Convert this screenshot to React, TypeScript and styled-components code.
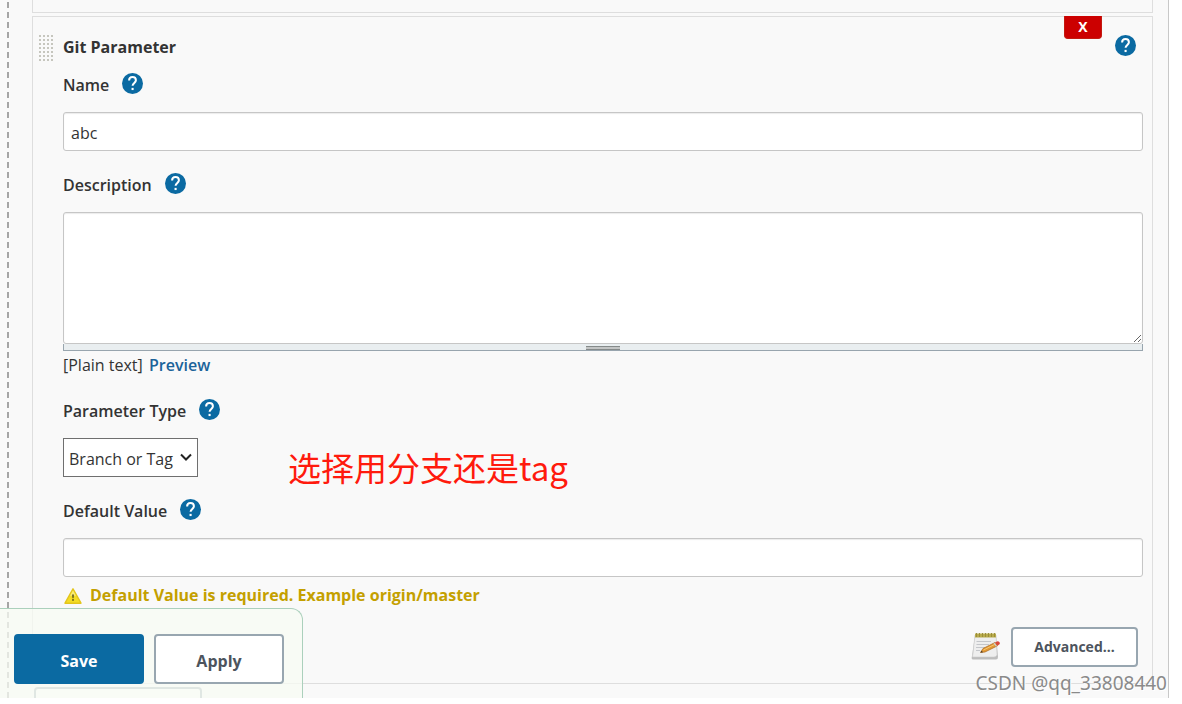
import React from 'react';
import styled, { createGlobalStyle } from 'styled-components';

const Global = createGlobalStyle`
  *, *::before, *::after { box-sizing: border-box; }
  body {
    margin: 0;
    background: #fff;
    color: #333;
    font: 400 16px/24px "Open Sans", "Noto Sans", "Noto Sans CJK SC", sans-serif;
  }
  button, input, textarea, select { font: inherit; color: inherit; margin: 0; }
`;

const Panel = styled.main`
  position: relative;
  height: calc(100vh - 6px);
  margin-right: 13px;
  padding: 0 15px 0 32px;
  overflow: hidden;
  background:
    repeating-linear-gradient(to bottom, #f9f9f9 0 2px, #a5a5a5 2px 8px, #f9f9f9 8px 10px) 7px 0 / 2px 100% no-repeat,
    #f9f9f9;
  border-right: 1px solid #c8c8c8;
`;

const PreviousCard = styled.div`
  height: 13px;
  margin-bottom: 3px;
  border: 1px solid #dedede;
  border-top: 0;
`;

const Card = styled.section`
  position: relative;
  padding: 18px 9px 16px 30px;
  border: 1px solid #dedede;
`;

const DragHandle = styled.div`
  position: absolute;
  left: 4px;
  top: 16px;
  width: 16px;
  height: 30px;
  background:
    repeating-linear-gradient(to bottom, #f9f9f9 0 2px, transparent 2px 4px),
    repeating-linear-gradient(to right, #f9f9f9 0 2px, #c6c6be 2px 4px);
`;

const CardHead = styled.header`
  display: flex;
  justify-content: space-between;
  height: 24px;
  margin-bottom: 13px;
  padding-right: 7px;
`;

const Title = styled.h2`
  margin: 0;
  font-size: 16px;
  line-height: 24px;
  font-weight: 700;
`;

const DeleteButton = styled.button`
  position: absolute;
  top: -1px;
  right: 50px;
  width: 38px;
  height: 23px;
  padding: 0;
  border: 1px solid #c31a10;
  border-top: 0;
  border-radius: 0 0 4px 4px;
  background: #c00;
  color: #fff;
  font-size: 14px;
  line-height: 20px;
  font-weight: 700;
`;

const HelpButton = styled.button`
  display: block;
  width: 21px;
  height: 21px;
  padding: 0;
  border: 0;
  background: none;
  svg { display: block; }
`;

const Field = styled.div`
  margin-bottom: 21px;
`;

const LabelRow = styled.div`
  display: flex;
  gap: 13px;
  height: 24px;
  margin-bottom: 16px;
  padding-top: 1px;
`;

const Label = styled.label`
  font-weight: 600;
`;

const TextInput = styled.input`
  display: block;
  width: 100%;
  height: 39px;
  padding: 2px 7px 0;
  border: 1px solid #c6c6c6;
  border-radius: 3px;
  background: #fff;
  box-shadow: inset 0 1px 1px rgba(0, 0, 0, 0.08);
  outline: 0;
`;

const TextArea = styled.textarea`
  display: block;
  width: 100%;
  height: 132px;
  padding: 6px;
  border: 1px solid #c6c6c6;
  border-radius: 3px;
  background: #fff;
  box-shadow: inset 0 1px 1px rgba(0, 0, 0, 0.08);
  resize: vertical;
  outline: 0;
`;

const Grip = styled.div`
  display: flex;
  justify-content: center;
  align-items: flex-end;
  height: 7px;
  margin-bottom: 2px;
  border: 1px solid #98a5ae;
  border-top: 0;
  background: #e9eef0;
  &::before {
    content: "";
    width: 34px;
    height: 4px;
    border: solid #858a8a;
    border-width: 1px 0;
    background: #c3c5c5;
  }
`;

const PreviewLink = styled.a`
  margin-left: 2px;
  color: #1b6399;
  font-weight: 600;
  text-decoration: none;
`;

const SelectBox = styled.div`
  position: relative;
  width: 135px;
  svg {
    position: absolute;
    right: 6px;
    top: 15px;
    pointer-events: none;
  }
`;

const Select = styled.select`
  display: block;
  width: 100%;
  height: 39px;
  padding: 2px 20px 0 5px;
  appearance: none;
  border: 1px solid #6f6f6f;
  border-radius: 0;
  background: #fff;
`;

const Warning = styled.p`
  display: flex;
  gap: 8px;
  margin: -15px 0 20px;
  padding-left: 1px;
  color: #c4a000;
  font-weight: 700;
  svg { display: block; margin-top: 4px; }
`;

const Actions = styled.div`
  display: flex;
  justify-content: flex-end;
  gap: 10px;
  padding-right: 5px;
  svg { margin-top: 4px; }
`;

const AdvancedButton = styled.button`
  width: 127px;
  height: 40px;
  padding: 0;
  border: 2px solid #98a6b0;
  border-radius: 4px;
  background: #fff;
  color: #4d545d;
  font-size: 14px;
  font-weight: 700;
`;

const AddButton = styled.button`
  display: block;
  width: 168px;
  height: 40px;
  margin: 3px 0 0 2px;
  border: 2px solid #98a6b0;
  border-radius: 4px;
  background: #fff;
`;

const BottomBar = styled.div`
  position: absolute;
  left: 0;
  bottom: 0;
  display: flex;
  gap: 10px;
  width: 303px;
  height: 90px;
  padding: 25px 0 0 14px;
  border: 1px solid #abd0bc;
  border-width: 1px 1px 0 0;
  border-top-right-radius: 12px;
  background: rgba(247, 251, 243, 0.76);
`;

const BarButton = styled.button<{ $primary?: boolean }>`
  width: 130px;
  height: 50px;
  padding: 3px 0 0;
  border: 2px solid ${p => (p.$primary ? '#0b6aa2' : '#98a6b0')};
  border-radius: 4px;
  background: ${p => (p.$primary ? '#0b6aa2' : '#fff')};
  color: ${p => (p.$primary ? '#fff' : '#4d545d')};
  font-weight: 700;
`;

const Annotation = styled.div`
  position: absolute;
  left: 288px;
  top: 443px;
  color: #ff1a0d;
  font: 400 33px/48px "Noto Sans CJK SC", sans-serif;
  white-space: nowrap;
`;

const Watermark = styled.div`
  position: absolute;
  right: 1px;
  bottom: 1px;
  color: #8a8a8a;
  font: 400 19px/28px "Noto Sans", sans-serif;
  text-shadow: 1px 1px 0 #fff;
  white-space: nowrap;
`;

const Help = ({ topic }: { topic: string }) => (
  <HelpButton type="button" aria-label={`Help for ${topic}`}>
    <svg width="21" height="21" viewBox="0 0 24 24" fill="#0b6aa2">
      <circle cx="12" cy="12" r="12" />
      <path d="M8.1 8.7C8.1 6.1 9.8 4.7 12 4.7s3.9 1.5 3.9 3.7c0 2.8-3.8 3.2-3.8 6.3" fill="none" stroke="#fff" strokeWidth="2.3" />
      <rect x="10.9" y="17" width="2.4" height="2.5" fill="#fff" />
    </svg>
  </HelpButton>
);

const WarningIcon = () => (
  <svg width="18" height="18" viewBox="0 0 18 18" aria-hidden="true">
    <path d="M9 1.8 17 16.2H1Z" fill="#f3dc25" stroke="#e3c51c" strokeWidth="1.4" strokeLinejoin="round" />
    <path d="M9 3.4 12 8.8 6 8.8Z" fill="#f9ec76" />
    <path d="M8.2 7.5h1.6l-.3 3.8H8.5Z" fill="#4b4718" />
    <rect x="8.2" y="12.2" width="1.6" height="1.5" fill="#4b4718" />
  </svg>
);

const NotepadIcon = () => (
  <svg width="30" height="32" viewBox="0 0 30 32" aria-hidden="true">
    <path d="M4 4H25L27 26Q27 28.5 25 28.5H2Q0 28.5 1 25Z" fill="#bdbdbd" />
    <path d="M4 4H25L26 24Q25 26 23 26H2Q1 26 2 23Z" fill="#eeeeee" stroke="#cfcfcf" strokeWidth=".6" />
    <path d="M4 2.5H25V6.5H4Z" fill="#b9ac4c" />
    <path d="M5.5 2V6M8.5 2V6M11.5 2V6M14.5 2V6M17.5 2V6M20.5 2V6M23.5 2V6" stroke="#9b8e3a" strokeWidth="1" />
    <path d="M5.5 10.5H20M5.5 13.5H18M5 16.5H14M5 19.5H9" stroke="#c4c6ca" strokeWidth="1" />
    <path d="M9.5 21.5 12 17.5 24 11.5 26.5 14.8 14 21Z" fill="#e39a35" stroke="#a9671c" strokeWidth=".7" />
    <path d="M12.5 19 25 12.8" stroke="#f6c46d" strokeWidth="1" />
    <path d="M9.5 21.5 10.6 19.7 12 21.2Z" fill="#3b3328" />
    <path d="M24 11.5 26.5 10.2Q29 10.2 28.8 13L26.5 14.8Z" fill="#d9483b" />
    <path d="M23 12 25.5 15.3" stroke="#c9cdd2" strokeWidth="1.2" />
  </svg>
);

export default function App() {
  return (
    <>
      <Global />
      <Panel>
        <PreviousCard />
        <Card>
          <DragHandle />
          <DeleteButton type="button">X</DeleteButton>
          <CardHead>
            <Title>Git Parameter</Title>
            <Help topic="Git Parameter" />
          </CardHead>

          <Field>
            <LabelRow>
              <Label htmlFor="name">Name</Label>
              <Help topic="Name" />
            </LabelRow>
            <TextInput id="name" type="text" defaultValue="abc" />
          </Field>

          <Field>
            <LabelRow>
              <Label htmlFor="description">Description</Label>
              <Help topic="Description" />
            </LabelRow>
            <TextArea id="description" />
            <Grip />
            <div>
              [Plain text] <PreviewLink href="#preview">Preview</PreviewLink>
            </div>
          </Field>

          <Field>
            <LabelRow>
              <Label htmlFor="type">Parameter Type</Label>
              <Help topic="Parameter Type" />
            </LabelRow>
            <SelectBox>
              <Select id="type" defaultValue="Branch or Tag">
                <option>Branch or Tag</option>
              </Select>
              <svg width="12" height="8" viewBox="0 0 12 8" aria-hidden="true">
                <path d="M1 1.5 6 6.5 11 1.5" fill="none" stroke="#222" strokeWidth="2" />
              </svg>
            </SelectBox>
          </Field>

          <Field>
            <LabelRow>
              <Label htmlFor="default">Default Value</Label>
              <Help topic="Default Value" />
            </LabelRow>
            <TextInput id="default" type="text" />
          </Field>

          <Warning>
            <WarningIcon />
            Default Value is required. Example origin/master
          </Warning>

          <Actions>
            <NotepadIcon />
            <AdvancedButton type="button">Advanced...</AdvancedButton>
          </Actions>
        </Card>
        <AddButton type="button" aria-label="Add parameter" />

        <BottomBar>
          <BarButton type="button" $primary>Save</BarButton>
          <BarButton type="button">Apply</BarButton>
        </BottomBar>
        <Annotation>选择用分支还是tag</Annotation>
        <Watermark>CSDN @qq_33808440</Watermark>
      </Panel>
    </>
  );
}
